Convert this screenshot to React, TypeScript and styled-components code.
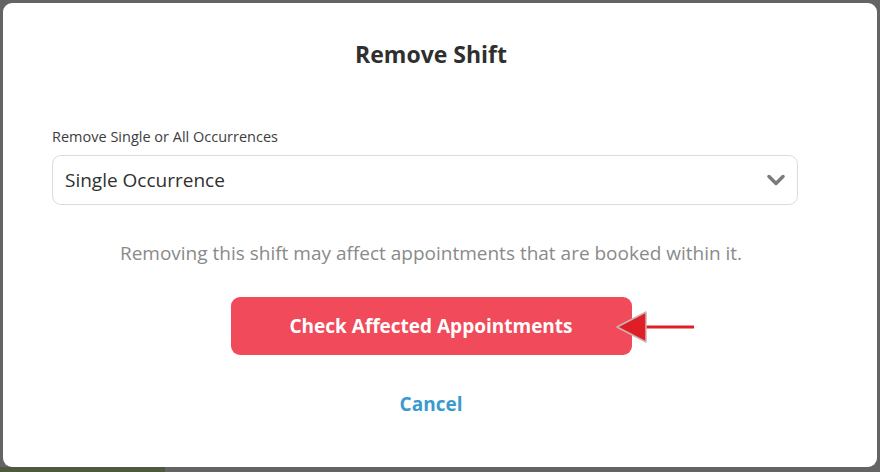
import React, { useState } from 'react';
import styled, { createGlobalStyle } from 'styled-components';

const GlobalStyle = createGlobalStyle`
	html, body {
		margin: 0;
		padding: 0;
		background: #646464;
	}
	body {
		font-family: "Open Sans", Lato, sans-serif;
	}
`

const Backdrop = styled.div`
	width: 880px;
	height: 472px;
	background: linear-gradient(#4d5a3f, #4d5a3f) 0 100% / 165px 5px no-repeat, #646464;
	padding: 3px 3px 5px 3px;
	box-sizing: border-box;
	display: flex;
`

const Dialog = styled.div`
	flex: 1;
	background: #ffffff;
	border-radius: 9px;
	padding: 35px 67px 0 49px;
	display: flex;
	flex-direction: column;
	align-items: center;
`

const Title = styled.h2`
	margin: 0;
	font-size: 23px;
	font-weight: 700;
	color: #2f2f2f;
`

const Field = styled.label`
	align-self: stretch;
	margin-top: 57px;
	display: flex;
	flex-direction: column;
	gap: 9px;
`

const FieldLabel = styled.span`
	font-size: 14.5px;
	color: #3d3d3d;
`

const SelectBox = styled.div`
	width: 746px;
	height: 50px;
	box-sizing: border-box;
	border: 1px solid #dcdcdc;
	border-radius: 9px;
	padding: 0 12px 0 12px;
	display: flex;
	align-items: center;
	justify-content: space-between;
	font-size: 19px;
	color: #2f2f2f;
`

const Note = styled.p`
	margin: 35px 0 0 0;
	font-size: 19px;
	color: #8a8a8a;
`

const ActionRow = styled.div`
	position: relative;
	margin-top: 31px;
`

const PrimaryButton = styled.button`
	display: block;
	width: 401px;
	height: 58px;
	border: none;
	border-radius: 9px;
	background: #f04a5b;
	color: #ffffff;
	font-family: inherit;
	font-size: 19px;
	font-weight: 700;
	cursor: pointer;
`

const Pointer = styled.svg`
	position: absolute;
	left: 384px;
	top: 13px;
`

const CancelLink = styled.button`
	margin-top: 36px;
	background: none;
	border: none;
	padding: 0;
	font-family: inherit;
	font-size: 19px;
	font-weight: 700;
	color: #3a9ad0;
	cursor: pointer;
`

export default function App() {
	const [choice] = useState('Single Occurrence');

	return (
		<Backdrop>
			<GlobalStyle />
			<Dialog>
				<Title>Remove Shift</Title>
				<Field>
					<FieldLabel>Remove Single or All Occurrences</FieldLabel>
					<SelectBox>
						<span>{choice}</span>
						<svg width="18" height="12" viewBox="0 0 18 12">
							<path d="M2 2.5 L9 9.5 L16 2.5" fill="none" stroke="#7a7a7a" strokeWidth="3.4" strokeLinecap="round" strokeLinejoin="round" />
						</svg>
					</SelectBox>
				</Field>
				<Note>Removing this shift may affect appointments that are booked within it.</Note>
				<ActionRow>
					<PrimaryButton>Check Affected Appointments</PrimaryButton>
					<Pointer width="82" height="34" viewBox="0 0 82 34">
						<line x1="28" y1="17" x2="79" y2="17" stroke="#e01e26" strokeWidth="3" />
						<polygon points="2,17 31,2 31,32" fill="#e01e26" stroke="#c9b5b5" strokeWidth="1.5" strokeLinejoin="round" />
					</Pointer>
				</ActionRow>
				<CancelLink>Cancel</CancelLink>
			</Dialog>
		</Backdrop>
	)
}
